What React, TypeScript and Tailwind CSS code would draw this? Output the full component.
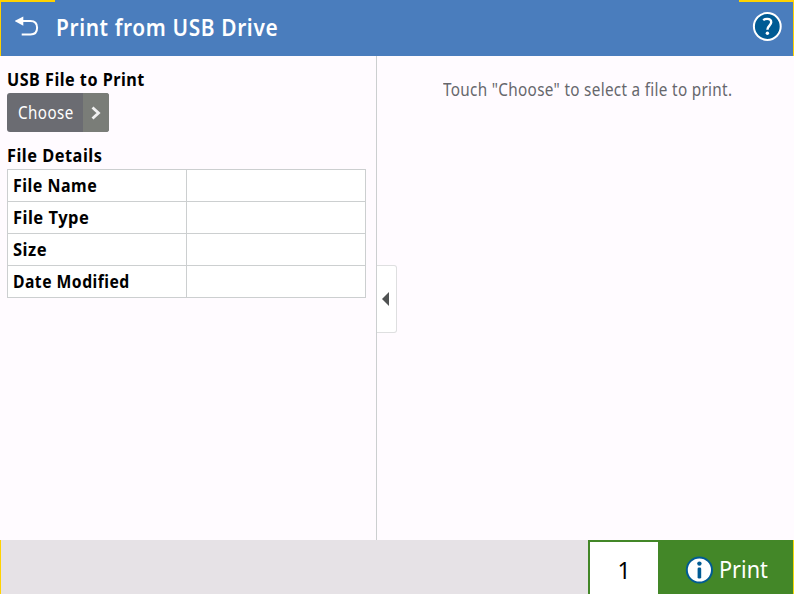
import { useLayoutEffect, useRef, useState } from "react";

type LabelProps = { text: string; width: number; className?: string };

// A label whose glyphs are condensed or widened to fill a set width.
function Label({ text, width, className = "" }: LabelProps) {
  const ref = useRef<HTMLSpanElement>(null);
  const [scale, setScale] = useState(1);
  useLayoutEffect(() => {
    const fit = () => {
      if (ref.current) setScale(width / ref.current.offsetWidth);
    };
    fit();
    document.fonts?.ready.then(fit);
  }, [text, width]);
  return (
    <span className={`block shrink-0 whitespace-nowrap ${className}`} style={{ width }}>
      <span ref={ref} className="inline-block origin-left align-top" style={{ transform: `scaleX(${scale})` }}>
        {text}
      </span>
    </span>
  );
}

const details = [
  { name: "File Name", width: 84.5 },
  { name: "File Type", width: 76 },
  { name: "Size", width: 34 },
  { name: "Date Modified", width: 117 },
];

function Header() {
  return (
    <header className="relative flex h-14 shrink-0 items-center bg-[#4a7dbd] pl-[15px] pr-3 text-white">
      <span className="absolute left-0 top-0 h-0.5 w-[55px] bg-[#ffd200]" />
      <span className="absolute left-0 top-0 h-14 w-px bg-[#ffd200]" />
      <span className="absolute right-0 top-0 h-0.5 w-[55px] bg-[#ffd200]" />
      <span className="absolute right-0 top-0 h-14 w-px bg-[#ffd200]" />
      <svg className="h-6 w-6 shrink-0" viewBox="0 0 24 24" fill="none">
        <path d="M7.5 5H15.5C20 5 22.1 7.4 22.1 11.7C22.1 16.2 20 18.4 15.5 18.4H6.7" stroke="white" strokeWidth="2" />
        <path d="M-0.3 5L8.3 0.5V9.7Z" fill="white" />
      </svg>
      <Label text="Print from USB Drive" width={222.5} className="ml-[17px] pb-0.5 text-2xl leading-[54px] font-semibold tracking-[0.03em]" />
      <svg className="ml-auto h-[30px] w-[30px] -translate-y-[1.5px]" viewBox="0 0 30 30">
        <circle cx="15.3" cy="15" r="13.4" fill="#005b94" stroke="white" strokeWidth="2" />
        <path d="M11.2 8.6C12.3 7.8 13.7 7.4 15.2 7.4C17.9 7.4 19.2 8.7 19.2 10.8C19.2 14 15.4 14.2 15.4 18.2" fill="none" stroke="white" strokeWidth="2.4" />
        <circle cx="15.4" cy="21.8" r="1.7" fill="white" />
      </svg>
    </header>
  );
}

export default function App() {
  return (
    <div className="flex h-[594px] w-[794px] flex-col overflow-hidden bg-[#fffbff] font-['Noto_Sans',sans-serif] text-lg text-black">
      <Header />
      <main className="flex min-h-0 flex-1">
        <section className="w-[377px] shrink-0 border-r border-[#cccfd0] pl-[7px] pt-[11px]">
          <Label text="USB File to Print" width={137.5} className="h-[26px] leading-6 font-bold tracking-[0.03em]" />
          <button className="flex h-[39px] w-[102px] overflow-hidden rounded-[3px] bg-[#6b6c72] text-white">
            <span className="flex h-full w-[76px] pl-[11px]">
              <Label text="Choose" width={55.5} className="text-left leading-[39px] tracking-[0.03em]" />
            </span>
            <span className="flex h-full w-[26px] items-center justify-center bg-[#7a7d78]">
              <svg className="h-3.5 w-2.5" viewBox="0 0 10 14">
                <path d="M1.5 1.5L7.5 7L1.5 12.5" fill="none" stroke="#f0f0f0" strokeWidth="2.8" />
              </svg>
            </span>
          </button>
          <Label text="File Details" width={95.5} className="mt-[11px] h-[26px] leading-6 font-bold tracking-[0.03em]" />
          <div className="w-[359px] border-l border-t border-[#cccfd0] bg-white">
            {details.map((d) => (
              <div key={d.name} className="flex h-8 border-b border-[#cccfd0]">
                <div className="w-[179px] border-r border-[#cccfd0] pl-[5px]">
                  <Label text={d.name} width={d.width} className="leading-[31px] font-bold tracking-[0.03em]" />
                </div>
                <div className="flex-1 border-r border-[#cccfd0]" />
              </div>
            ))}
          </div>
        </section>
        <section className="flex-1">
          <div className="ml-[66px] mt-[21px] h-6">
            <Label text={'Touch "Choose" to select a file to print.'} width={289} className="leading-6 tracking-[0.02em] text-[#66676c]" />
          </div>
          <div className="mt-[164px] flex h-[68px] w-5 items-center rounded-r-[3px] border border-l-0 border-[#dedfe0] bg-white pl-[5px]">
            <svg className="h-3.5 w-[7px]" viewBox="0 0 7 14">
              <path d="M0 7L7 0V14Z" fill="#505353" />
            </svg>
          </div>
        </section>
      </main>
      <footer className="flex h-[54px] shrink-0 border-l border-r border-l-[#ffd200] border-r-[#f4d90a] bg-[#e6e2e6]">
        <div className="flex-1" />
        <div className="flex w-[70px] justify-center border-l-2 border-t-2 border-[#438728] bg-white">
          <span className="text-[23px] leading-[57px]">1</span>
        </div>
        <div className="flex w-[135px] items-center bg-[#438728] pl-[27px] text-white">
          <svg className="mt-[5px] h-7 w-7" viewBox="0 0 28 28">
            <circle cx="14.4" cy="14" r="12.6" fill="white" stroke="#005b94" strokeWidth="2" />
            <circle cx="14.4" cy="7.6" r="2.2" fill="#005b94" />
            <rect x="12.6" y="11.4" width="3.6" height="11.2" rx="1.4" fill="#005b94" />
          </svg>
          <Label text="Print" width={49} className="ml-[6px] pt-1 text-[23px] leading-[54px]" />
        </div>
      </footer>
    </div>
  );
}
